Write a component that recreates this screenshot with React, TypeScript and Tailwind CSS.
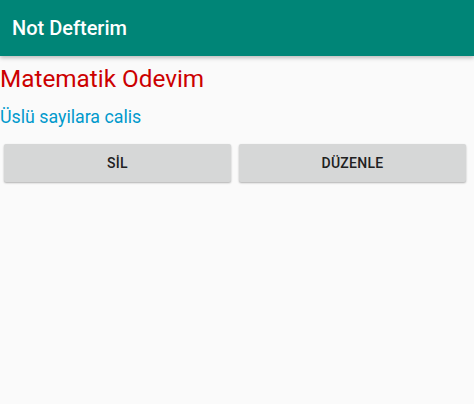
const App = () => {
  return (
    <div
      className="min-h-screen w-full bg-[#fafafa]"
      style={{ fontFamily: "Roboto, 'Noto Sans', sans-serif" }}
    >
      {/* Toolbar */}
      <div className="h-14 bg-[#008577] flex items-center px-3 shadow-[0_2px_4px_rgba(0,0,0,0.25)]">
        <h1 className="text-[20px] font-medium text-white">Not Defterim</h1>
      </div>

      {/* Note */}
      <div className="pt-[7px]">
        <p className="text-[24.3px] leading-[32px] text-[#cc0000]">Matematik Odevim</p>
        <p className="text-[17.8px] leading-[24px] text-[#0099cc] mt-[10px]">Üslü sayilara calis</p>
      </div>

      {/* Actions */}
      <div className="grid grid-cols-2 gap-2 pl-1 pr-2 mt-[15px]">
        {["SİL", "DÜZENLE"].map((label) => (
          <button
            key={label}
            className="h-[38px] rounded-[2px] bg-[#d6d7d7] text-[14px] font-medium text-[#212121] tracking-[0.02em] shadow-[0_1px_2px_rgba(0,0,0,0.3)]"
          >
            {label}
          </button>
        ))}
      </div>
    </div>
  );
};

export default App;
